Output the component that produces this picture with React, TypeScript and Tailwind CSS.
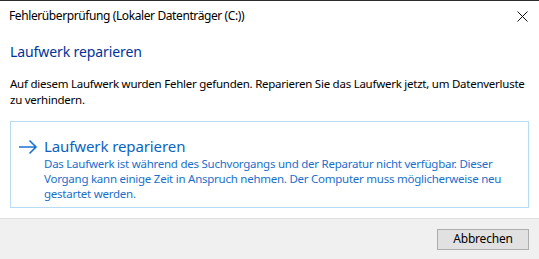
import React from "react";

export default function App() {
  const font = { fontFamily: '"Noto Sans", "Open Sans", sans-serif' };
  return (
    <div
      className="w-[539px] h-[259px] bg-white border-t border-[#2b2b2b] flex flex-col overflow-hidden text-black"
      style={font}
    >
      <div className="h-[30px] flex items-center justify-between pl-[9px] pr-[10px] text-[12px] leading-none">
        <span className="tracking-[-0.4px]">Fehlerüberprüfung (Lokaler Datenträger (C:))</span>
        <svg width="11" height="11" viewBox="0 0 11 11" className="mr-[1px]">
          <path d="M0.5 0.5 L10.5 10.5 M10.5 0.5 L0.5 10.5" stroke="#111" strokeWidth="1" fill="none" />
        </svg>
      </div>
      <div className="flex-1 flex flex-col px-[10px]">
        <div className="mt-[11px] text-[14px] leading-[20px] text-[#003399] tracking-[-0.1px]">Laufwerk reparieren</div>
        <div className="mt-[14px] text-[11.5px] leading-[16px] pr-[4px] tracking-[-0.25px]">
          Auf diesem Laufwerk wurden Fehler gefunden. Reparieren Sie das Laufwerk jetzt, um Datenverluste zu verhindern.
        </div>
        <div className="mt-[13px] h-[87px] border border-[#b9dcf5] flex pl-[7px] pt-[14px]">
          <svg width="20" height="16" viewBox="0 0 20 16" className="mt-[3px] shrink-0">
            <path d="M1 8 H18 M11.5 1.5 L18 8 L11.5 14.5" stroke="#1a73d0" strokeWidth="1.6" fill="none" />
          </svg>
          <div className="ml-[6px] flex flex-col pr-[20px]">
            <div className="text-[15px] leading-[20px] text-[#0b63bf] tracking-[-0.1px]">Laufwerk reparieren</div>
            <div className="text-[11.5px] leading-[15px] text-[#1a6fcc] tracking-[-0.25px]">
              Das Laufwerk ist während des Suchvorgangs und der Reparatur nicht verfügbar. Dieser Vorgang kann einige Zeit in Anspruch nehmen. Der Computer muss möglicherweise neu gestartet werden.
            </div>
          </div>
        </div>
      </div>
      <div className="h-[41px] shrink-0 bg-[#f0f0f0] border-t border-[#dfdfdf] flex items-center justify-end pr-[10px]">
        <button className="w-[92px] h-[21px] bg-[#e1e1e1] border border-[#adadad] text-[12px] leading-none text-black tracking-[-0.2px]">
          Abbrechen
        </button>
      </div>
    </div>
  );
}
